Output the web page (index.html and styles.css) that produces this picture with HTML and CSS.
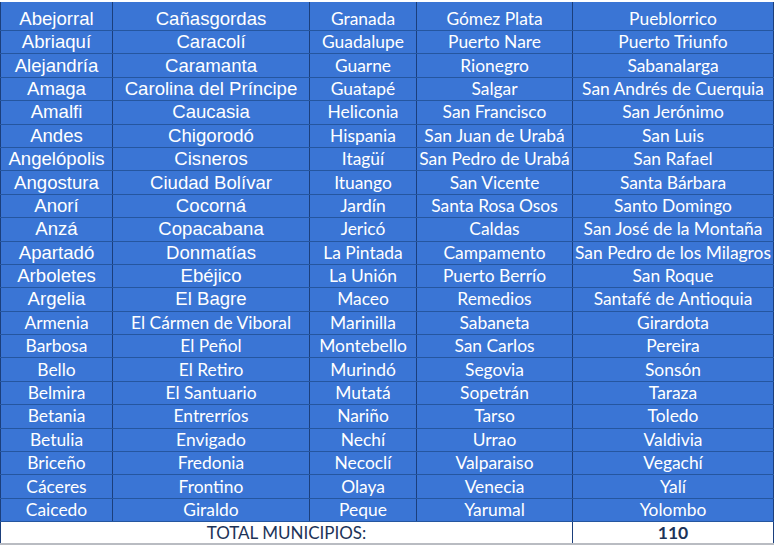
FILE: index.html
```html
<!DOCTYPE html>
<html lang="es">
<head>
<meta charset="utf-8">
<title>Municipios de Antioquia</title>
<link rel="stylesheet" href="styles.css">
</head>
<body>
<table class="grid">
<colgroup><col class="c1"><col class="c2"><col class="c3"><col class="c4"><col class="c5"></colgroup>
<tbody>
<tr class="first"><td class="a">Abejorral</td><td class="a">Cañasgordas</td><td>Granada</td><td>Gómez Plata</td><td>Pueblorrico</td></tr>
<tr><td class="a">Abriaquí</td><td class="a">Caracolí</td><td>Guadalupe</td><td>Puerto Nare</td><td>Puerto Triunfo</td></tr>
<tr><td class="a">Alejandría</td><td class="a">Caramanta</td><td>Guarne</td><td>Rionegro</td><td>Sabanalarga</td></tr>
<tr><td class="a">Amaga</td><td class="a">Carolina del Príncipe</td><td>Guatapé</td><td>Salgar</td><td>San Andrés de Cuerquia</td></tr>
<tr><td class="a">Amalfi</td><td class="a">Caucasia</td><td>Heliconia</td><td>San Francisco</td><td>San Jerónimo</td></tr>
<tr><td class="a">Andes</td><td class="a">Chigorodó</td><td>Hispania</td><td>San Juan de Urabá</td><td>San Luis</td></tr>
<tr><td class="a">Angelópolis</td><td class="a">Cisneros</td><td>Itagüí</td><td>San Pedro de Urabá</td><td>San Rafael</td></tr>
<tr><td class="a">Angostura</td><td class="a">Ciudad Bolívar</td><td>Ituango</td><td>San Vicente</td><td>Santa Bárbara</td></tr>
<tr><td class="a">Anorí</td><td class="a">Cocorná</td><td>Jardín</td><td>Santa Rosa Osos</td><td>Santo Domingo</td></tr>
<tr><td class="a">Anzá</td><td class="a">Copacabana</td><td>Jericó</td><td>Caldas</td><td>San José de la Montaña</td></tr>
<tr><td class="a">Apartadó</td><td class="a">Donmatías</td><td>La Pintada</td><td>Campamento</td><td>San Pedro de los Milagros</td></tr>
<tr><td class="a">Arboletes</td><td class="a">Ebéjico</td><td>La Unión</td><td>Puerto Berrío</td><td>San Roque</td></tr>
<tr><td class="a">Argelia</td><td class="a">El Bagre</td><td>Maceo</td><td>Remedios</td><td>Santafé de Antioquia</td></tr>
<tr><td>Armenia</td><td>El Cármen de Viboral</td><td>Marinilla</td><td>Sabaneta</td><td>Girardota</td></tr>
<tr><td>Barbosa</td><td>El Peñol</td><td>Montebello</td><td>San Carlos</td><td>Pereira</td></tr>
<tr><td>Bello</td><td>El Retiro</td><td>Murindó</td><td>Segovia</td><td>Sonsón</td></tr>
<tr><td>Belmira</td><td>El Santuario</td><td>Mutatá</td><td>Sopetrán</td><td>Taraza</td></tr>
<tr><td>Betania</td><td>Entrerríos</td><td>Nariño</td><td>Tarso</td><td>Toledo</td></tr>
<tr><td>Betulia</td><td>Envigado</td><td>Nechí</td><td>Urrao</td><td>Valdivia</td></tr>
<tr><td>Briceño</td><td>Fredonia</td><td>Necoclí</td><td>Valparaiso</td><td>Vegachí</td></tr>
<tr><td>Cáceres</td><td>Frontino</td><td>Olaya</td><td>Venecia</td><td>Yalí</td></tr>
<tr><td>Caicedo</td><td>Giraldo</td><td>Peque</td><td>Yarumal</td><td>Yolombo</td></tr>
<tr class="total"><td colspan="4">TOTAL MUNICIPIOS:</td><td class="num">110</td></tr>
</tbody>
</table>
</body>
</html>
```

FILE: styles.css
```css
html, body {
  margin: 0;
  padding: 0;
  background: #ffffff;
}
body {
  padding-top: 2px;
}
.grid {
  border-collapse: collapse;
  table-layout: fixed;
  width: 773px;
  font-family: Lato, "Noto Sans", sans-serif;
  font-size: 17.4px;
  color: #ffffff;
}
.c1 { width: 112px; }
.c2 { width: 197px; }
.c3 { width: 107px; }
.c4 { width: 156px; }
.c5 { width: 201px; }
.grid td {
  background: #3a75d5;
  height: 22.4px;
  padding: 0;
  text-align: center;
  vertical-align: middle;
  white-space: nowrap;
  overflow: hidden;
  line-height: 20px;
  border-top: 1px solid #25569f;
  border-bottom: 1px solid #25569f;
  border-left: 1px solid #1b3f7c;
  border-right: 1px solid #1b3f7c;
}
.grid tr.first td {
  height: 27px;
  border-top: none;
  vertical-align: bottom;
  padding-bottom: 1px;
}
.grid td.a {
  font-family: "Liberation Sans", Arial, sans-serif;
  font-size: 18.6px;
}
.grid tr.total td {
  background: #ffffff;
  color: #1c3358;
  font-size: 17px;
  height: 21px;
  border-top: 1px solid #1b3f7c;
  border-bottom: 2px solid #b9bcc2;
  border-left: 1px solid #1b3f7c;
  border-right: 1px solid #1b3f7c;
}
.grid tr.total td.num {
  font-weight: 700;
  font-size: 17.5px;
}
```
